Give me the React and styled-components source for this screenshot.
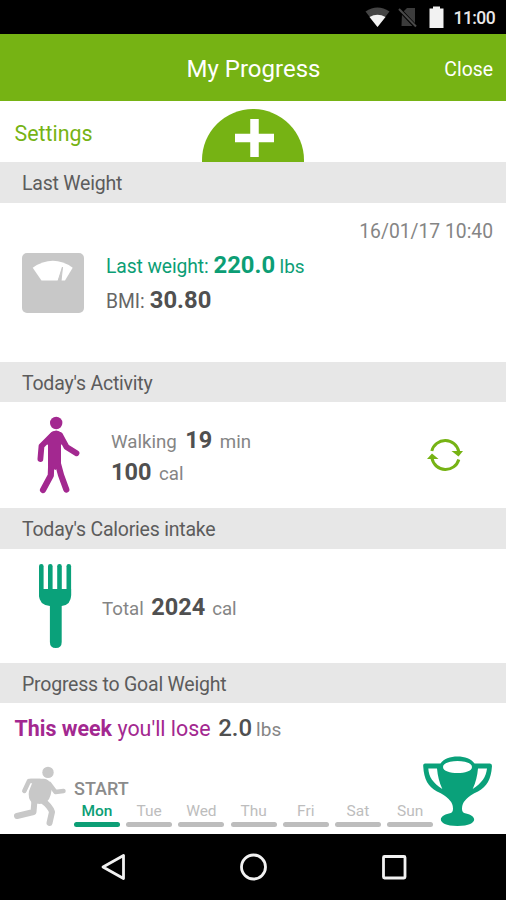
import React from "react";
import styled, { createGlobalStyle } from "styled-components";

const GlobalStyle = createGlobalStyle`
  * { box-sizing: border-box; }
  body { margin: 0; background: #fff; }
`;

const Screen = styled.main`
  display: flex;
  flex-direction: column;
  width: 506px;
  height: 900px;
  overflow: hidden;
  background: #fff;
  font-family: Roboto, "Liberation Sans", sans-serif;
  color: #757575;
`;

const StatusBar = styled.div`
  display: flex;
  flex: none;
  align-items: center;
  justify-content: flex-end;
  height: 34px;
  padding: 2px 11px 0 0;
  background: #000;
`;

const Header = styled.header`
  display: grid;
  flex: none;
  grid-template-columns: 1fr auto 1fr;
  align-items: center;
  height: 67px;
  padding: 3px 13px 0 14px;
  background: #76b314;
`;

const Toolbar = styled.div`
  display: grid;
  flex: none;
  grid-template-columns: 1fr 102px 1fr;
  height: 61px;
  padding: 0 14px;
`;

const AddButton = styled.button`
  display: flex;
  align-self: end;
  justify-content: center;
  width: 102px;
  height: 53px;
  padding: 10px 0 0 1px;
  border: 0;
  border-radius: 51px 51px 0 0;
  background: #76b314;
`;

const SectionTitle = styled.h2`
  flex: none;
  height: ${(p) => p.$h}px;
  margin: 0;
  padding-left: 22px;
  background: #e7e7e7;
  color: #5c5c5c;
  font-size: 19.5px;
  font-weight: 400;
  line-height: 44px;
  letter-spacing: -0.22px;
`;

const Panel = styled.section`
  display: flex;
  flex: none;
  height: ${(p) => p.$h}px;
  padding: ${(p) => p.$pad};
  flex-direction: ${(p) => (p.$column ? "column" : "row")};
`;

const Line = styled.div`
  display: flex;
  align-items: baseline;
  height: ${(p) => p.$h || 32}px;
  line-height: ${(p) => p.$h || 32}px;
  white-space: nowrap;
`;

const Text = styled.span`
  color: ${(p) => p.$color || "#858585"};
  font-size: ${(p) => p.$size || 19}px;
  font-weight: ${(p) => p.$weight || 400};
  letter-spacing: ${(p) => p.$ls || 0}px;
  margin-left: ${(p) => p.$gap || 0}px;
  margin-top: ${(p) => p.$top || 0}px;
  white-space: nowrap;
`;

const CloseText = styled(Text)`
  justify-self: end;
`;

const TimeStamp = styled(Text)`
  align-self: flex-end;
  line-height: 22px;
`;

const Details = styled.div`
  flex: 1;
  margin-left: ${(p) => p.$gap}px;
  padding-top: ${(p) => p.$top || 0}px;
`;

const Icon = styled.svg`
  display: block;
  flex: none;
  margin: ${(p) => p.$m || "0"};
`;

const Row = styled.div`
  display: flex;
`;

const WeekColumn = styled.div`
  display: flex;
  flex-direction: column;
  margin-left: 7px;
`;

const Days = styled.div`
  display: grid;
  grid-template-columns: repeat(7, 46px);
  gap: 6.2px;
`;

const Day = styled.div`
  color: ${(p) => (p.$active ? "#0c9e75" : "#bdbdbd")};
  font-size: 15.5px;
  font-weight: ${(p) => (p.$active ? 500 : 400)};
  line-height: 24px;
  text-align: center;

  &::after {
    content: "";
    display: block;
    height: 5px;
    margin-top: -1px;
    border-radius: 3px;
    background: ${(p) => (p.$active ? "#0c9e75" : "#bdbdbd")};
  }
`;

const NavBar = styled.nav`
  display: flex;
  flex: none;
  align-items: center;
  justify-content: center;
  gap: 112px;
  height: 66px;
  padding-left: 1px;
  background: #000;
`;

const DARK = "#505050";
const TEAL = "#0c9e75";
const PLUM = "#a32890";

const days = ["Mon", "Tue", "Wed", "Thu", "Fri", "Sat", "Sun"];

const StatusIcons = () => (
  <Icon width="84" height="34" viewBox="362 0 84 34" $m="-2px 8px 0 0">
    <path d="M365.500 11.500 Q377.500 3.500 389.500 11.500 L377.500 27Z" fill="#444" />
    <path d="M369.500 17 Q377.500 12.500 385.500 17 L377.500 27Z" fill="#f2f2f2" />
    <path d="M402 13 L407 8 H415 V26 H401.500Z" fill="#3c3c3c" />
    <path d="M399 9 L416 27" stroke="#000" strokeWidth="4" />
    <path d="M399 9 L416 26.500" stroke="#4a4a4a" strokeWidth="2" />
    <path d="M430 8.500 H433 V6.500 H440 V8.500 H443.500 V28 H429.500V8.500Z" fill="#f2f2f2" />
  </Icon>
);

const ScaleIcon = () => (
  <Icon width="62" height="60" viewBox="0 0 62 60" $m="10px 0 0">
    <rect width="62" height="60" rx="5" fill="#c8c8c8" />
    <path d="M10.700 14.700 Q31 1 50.700 14.700 L43 27.500 H19.500Z" fill="#fff" />
    <path d="M36 28 L40.500 14 L39 28Z" fill="#c8c8c8" stroke="#c8c8c8" />
  </Icon>
);

const WalkIcon = () => (
  <Icon width="44" height="78" viewBox="36 416 44 78">
    <g fill="none" stroke={PLUM} strokeLinecap="round" strokeLinejoin="round" strokeWidth="5.800">
      <path d="M53 434.500 L41.500 446 L40.400 459" />
      <path d="M60 435 L66.500 447 L76.500 453.300" />
      <path d="M51.300 462 L50.800 475.500 L43 490" strokeWidth="6.200" />
      <path d="M57.500 462 L61 475 L66.300 489.500" strokeWidth="6.200" />
    </g>
    <path d="M50 434 Q56 427.500 62 433.500 L65 441 L61 445 V464 L55.500 470 L48 466 V445 L44.500 442Z" fill={PLUM} />
    <circle cx="56.200" cy="423" r="6.200" fill={PLUM} />
  </Icon>
);

const SyncIcon = () => (
  <Icon width="36" height="36" viewBox="427 437 36 36" $m="21px 43px 0 0">
    <g fill="none" stroke="#76b314" strokeWidth="3">
      <path d="M431.800 451 A13.800 13.800 0 0 1 458.700 451.500" />
      <path d="M458.800 459.500 A13.800 13.800 0 0 1 432 458.500" />
    </g>
    <path d="M451.500 451 H463 L458.500 456.500Z M427 459 L432 453.500 L438.500 459Z" fill="#76b314" />
  </Icon>
);

const ForkIcon = () => (
  <Icon width="34" height="86" viewBox="38 563 34 86">
    <g fill="#0aa17a">
      <rect x="39" y="564" width="4.600" height="34" rx="2.200" />
      <rect x="48" y="564" width="4.600" height="30" rx="2.200" />
      <rect x="57.200" y="564" width="4.600" height="30" rx="2.200" />
      <rect x="66.500" y="564" width="4.600" height="34" rx="2.200" />
      <path d="M39 589 H71.100 V595 Q71 605 61.700 606 V642 Q61.700 648 55.800 648 Q49.900 648 49.900 642 V606 Q39 605 39 595Z" />
    </g>
  </Icon>
);

const RunIcon = () => (
  <Icon width="54" height="62" viewBox="13 766 54 62" $m="22px 0 0 -1px">
    <g fill="none" stroke="#c8c8c8" strokeLinecap="round" strokeLinejoin="round" strokeWidth="4.500">
      <path d="M40 781 H29 L24.300 791" />
      <path d="M49.500 784 L55.500 792 L63.500 791" />
      <path d="M34.500 800 L33.500 812 L17 816" strokeWidth="6" />
      <path d="M43 801 Q50 806 52 812 L49.500 823" strokeWidth="6" />
    </g>
    <path d="M30 778.700 H44 Q49 779 51.500 785 Q52 797 47 801.500 L40 804 L32 803 Q27.500 798 29 791 L33 781Z" fill="#c8c8c8" />
    <circle cx="48" cy="772.400" r="5.700" fill="#c8c8c8" />
  </Icon>
);

const TrophyIcon = () => (
  <Icon width="71" height="72" viewBox="422 755 71 72" $m="11px 0 0 -11px">
    <path fillRule="evenodd" fill="#0aa17a" d="M440.500 763.500 H425 Q423 763.500 423.200 766 C424 780 428 786 437 791.500 Q453.500 799 453 809 Q453 813 449 813.500 C437 816 437 826 457.500 826 C478 826 478 816 466 813.500 Q462 813 462 809 Q461.500 799 478 791.500 C487 786 491 780 492 766 Q492 763.500 490 763.500 H474.500 C469 754 446 754 440.500 763.500Z M428.300 768.500 H437 Q438 780 442.300 789 C433 783 428.800 777 428.300 768.500Z M478 768.500 H487 C486 777 482 783 472.700 789 Q477 780 478 768.500Z M443 767 C443 759 472 759 472 767 C472 775 443 775 443 767Z" />
  </Icon>
);

export default function App() {
  return (
    <>
      <GlobalStyle />
      <Screen>
        <StatusBar>
          <StatusIcons />
          <Text $color="#e8e8e8" $size={17.5} $weight={500} $ls={-0.6}>11:00</Text>
        </StatusBar>
        <Header>
          <span />
          <Text $color="#fff" $size={24}>My Progress</Text>
          <CloseText $color="#fff" $size={19.4}>Close</CloseText>
        </Header>
        <Toolbar>
          <Text $color="#76b314" $size={21.4} $top={20} $gap={0.5}>Settings</Text>
          <AddButton aria-label="Add">
            <svg width="40" height="40" viewBox="0 0 40 40">
              <path d="M20.500 0V38M1 19H40" stroke="#fff" strokeWidth="8.500" />
            </svg>
          </AddButton>
        </Toolbar>

        <SectionTitle $h={41}>Last Weight</SectionTitle>
        <Panel $h={159} $pad="18px 13px 0 22px" $column>
          <TimeStamp $size={19.3}>16/01/17 10:40</TimeStamp>
          <Row>
            <ScaleIcon />
            <Details $gap={22} $top={5}>
              <Line $h={35}>
                <Text $color={TEAL} $size={19.3} $ls={-0.1}>Last weight:</Text>
                <Text $color={TEAL} $size={23.8} $weight={700} $gap={5}>220.0</Text>
                <Text $color={TEAL} $gap={4.5}>lbs</Text>
              </Line>
              <Line $h={34}>
                <Text $color="#666" $size={19.3}>BMI:</Text>
                <Text $color={DARK} $size={23.8} $weight={700} $gap={5}>30.80</Text>
              </Line>
            </Details>
          </Row>
        </Panel>

        <SectionTitle $h={40}>Today's Activity</SectionTitle>
        <Panel $h={106} $pad="14px 0 0 36px">
          <WalkIcon />
          <Details $gap={31} $top={8}>
            <Line>
              <Text $size={18.7}>Walking</Text>
              <Text $color={DARK} $size={23.5} $weight={700} $gap={8.5}>19</Text>
              <Text $size={18.7} $gap={7.5}>min</Text>
            </Line>
            <Line>
              <Text $color={DARK} $size={23.5} $weight={700}>100</Text>
              <Text $size={18.7} $gap={7.5}>cal</Text>
            </Line>
          </Details>
          <SyncIcon />
        </Panel>

        <SectionTitle $h={41}>Today's Calories intake</SectionTitle>
        <Panel $h={114} $pad="14px 0 0 38px">
          <ForkIcon />
          <Details $gap={30} $top={1}>
            <Line $h={86}>
              <Text $size={18.7}>Total</Text>
              <Text $color={DARK} $size={23.5} $weight={700} $gap={7.5}>2024</Text>
              <Text $size={18.7} $gap={7}>cal</Text>
            </Line>
          </Details>
        </Panel>

        <SectionTitle $h={40}>Progress to Goal Weight</SectionTitle>
        <Panel $h={131} $pad="9px 13px 0 14px" $column>
          <Line>
            <Text $color={PLUM} $size={21.4} $weight={700} $gap={0.5}>This week</Text>
            <Text $color={PLUM} $size={21.4} $gap={5.5}>you'll lose</Text>
            <Text $color={DARK} $size={24} $weight={500} $gap={7.5}>2.0</Text>
            <Text $gap={4}>lbs</Text>
          </Line>
          <Row>
            <RunIcon />
            <WeekColumn>
              <Text $color="#8b8b8b" $size={18} $weight={500} $top={34}>START</Text>
              <Days>
                {days.map((day) => (
                  <Day key={day} $active={day === "Mon"}>{day}</Day>
                ))}
              </Days>
            </WeekColumn>
            <TrophyIcon />
          </Row>
        </Panel>

        <NavBar>
          <svg width="28" height="30" viewBox="0 0 28 30">
            <path d="M23.500 3.500V26.500L3 15Z" fill="none" stroke="#f2f2f2" strokeWidth="2.800" strokeLinejoin="round" />
          </svg>
          <svg width="28" height="30" viewBox="0 0 28 30">
            <circle cx="13.500" cy="15" r="12" fill="none" stroke="#f2f2f2" strokeWidth="2.800" />
          </svg>
          <svg width="28" height="30" viewBox="0 0 28 30">
            <rect x="3.500" y="4.500" width="21.500" height="21.500" rx="1" fill="none" stroke="#f2f2f2" strokeWidth="2.800" />
          </svg>
        </NavBar>
      </Screen>
    </>
  );
}
